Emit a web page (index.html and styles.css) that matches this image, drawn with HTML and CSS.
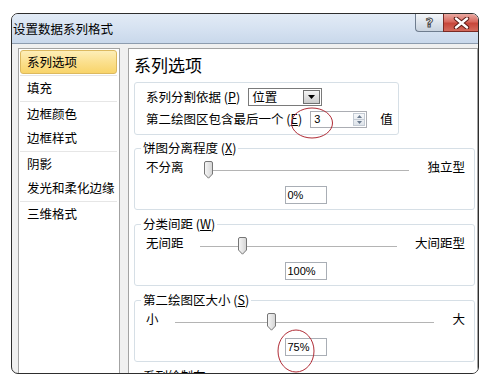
FILE: index.html
```html
<!DOCTYPE html>
<html lang="zh-CN">
<head>
    <meta charset="UTF-8">
    <title>设置数据系列格式</title>
    <link rel="stylesheet" href="styles.css">
</head>
<body>
    <div class="window">
        <div class="titlebar">
            <span class="title">设置数据系列格式</span>
            <div class="caption-buttons">
                <span class="btn-help">?</span>
                <span class="btn-close">
                    <svg width="17" height="12" viewBox="0 0 17 12">
                        <path d="M3 1.5 L14 10.5 M14 1.5 L3 10.5" stroke="#5a1a14" stroke-width="4.4" stroke-linecap="round"/>
                        <path d="M3 1.5 L14 10.5 M14 1.5 L3 10.5" stroke="#fff" stroke-width="2.4" stroke-linecap="round"/>
                    </svg>
                </span>
            </div>
        </div>
        <div class="client">
            <ul class="nav">
                <li class="nav-item active">系列选项</li>
                <li class="nav-sep"></li>
                <li class="nav-item">填充</li>
                <li class="nav-sep"></li>
                <li class="nav-item">边框颜色</li>
                <li class="nav-item">边框样式</li>
                <li class="nav-sep"></li>
                <li class="nav-item">阴影</li>
                <li class="nav-item">发光和柔化边缘</li>
                <li class="nav-sep"></li>
                <li class="nav-item">三维格式</li>
            </ul>
            <div class="panel">
                <h2 class="panel-title">系列选项</h2>

                <div class="group-plain">
                    <div class="row">
                        <span class="label">系列分割依据 (<u>P</u>)</span>
                        <div class="select">
                            <span>位置</span>
                            <span class="select-btn">
                                <svg width="7" height="4" viewBox="0 0 7 4"><path d="M0 0 H7 L3.5 4 Z" fill="#000"/></svg>
                            </span>
                        </div>
                    </div>
                    <div class="row">
                        <span class="label">第二绘图区包含最后一个 (<u>E</u>)</span>
                        <div class="spin">
                            <span class="spin-value">3</span>
                            <span class="spin-btns">
                                <span class="spin-up"><svg width="5" height="3" viewBox="0 0 5 3"><path d="M0 3 L2.5 0 L5 3 Z" fill="#6b7b8f"/></svg></span>
                                <span class="spin-down"><svg width="5" height="3" viewBox="0 0 5 3"><path d="M0 0 H5 L2.5 3 Z" fill="#6b7b8f"/></svg></span>
                            </span>
                        </div>
                        <span class="unit">值</span>
                    </div>
                </div>

                <fieldset class="group">
                    <legend>饼图分离程度 (<u>X</u>)</legend>
                    <div class="slider-row">
                        <span>不分离</span>
                        <div class="track track-wide"><span class="thumb" style="left: 0%"></span></div>
                        <span>独立型</span>
                    </div>
                    <div class="value">0%</div>
                </fieldset>

                <fieldset class="group">
                    <legend>分类间距 (<u>W</u>)</legend>
                    <div class="slider-row">
                        <span>无间距</span>
                        <div class="track"><span class="thumb" style="left: 20%"></span></div>
                        <span>大间距型</span>
                    </div>
                    <div class="value">100%</div>
                </fieldset>

                <fieldset class="group">
                    <legend>第二绘图区大小 (<u>S</u>)</legend>
                    <div class="slider-row">
                        <span>小</span>
                        <div class="track"><span class="thumb" style="left: 35.9%"></span></div>
                        <span>大</span>
                    </div>
                    <div class="value">75%</div>
                </fieldset>

                <fieldset class="group">
                    <legend>系列绘制在</legend>
                </fieldset>
            </div>
        </div>
    </div>

    <!-- red marks drawn over the screenshot -->
    <svg class="marks" width="489" height="387">
        <ellipse cx="312" cy="123" rx="20.5" ry="15" />
        <ellipse cx="296" cy="351" rx="18" ry="21" />
    </svg>
</body>
</html>
```

FILE: styles.css
```css
* {
    box-sizing: border-box;
}

body {
    margin: 0;
    background: #fff;
    font-family: "Noto Sans CJK SC", "Noto Sans", sans-serif;
    font-size: 12.5px;
    color: #000;
    position: relative;
    width: 489px;
    height: 387px;
    overflow: hidden;
}

.window {
    margin: 13px 0 0 11px;
    width: 468px;
    height: 361px;
    border: 1px solid #2e2e2e;
    border-radius: 7px;
    overflow: hidden;
    background: #f0f0f0;
    display: flex;
    flex-direction: column;
}

/* title bar */
.titlebar {
    height: 30px;
    flex: none;
    display: flex;
    justify-content: space-between;
    align-items: flex-start;
    border-bottom: 1px solid #8d9cae;
    background: linear-gradient(180deg, #e2ebf6 0%, #d6e2f1 50%, #c9d8eb 100%);
}

.title {
    line-height: 29px;
    padding-left: 1px;
    font-size: 12.5px;
}

.caption-buttons {
    display: flex;
    height: 18px;
}

.btn-help {
    width: 28px;
    height: 18px;
    border-left: 1px solid #6e7c8e;
    border-bottom: 1px solid #6e7c8e;
    border-bottom-left-radius: 4px;
    background: linear-gradient(180deg, #f3f6f9 0%, #dde4ec 50%, #c9d3df 100%);
    color: #fff;
    -webkit-text-stroke: 1px #4a4a4a;
    font-family: "DejaVu Sans", sans-serif;
    font-weight: bold;
    font-size: 13px;
    line-height: 17px;
    text-align: center;
}

.btn-close {
    width: 35px;
    height: 18px;
    border-left: 1px solid #7a2a24;
    border-bottom: 1px solid #7a2a24;
    background: linear-gradient(180deg, #e9aaa2 0%, #d8695e 45%, #c7463a 55%, #d36a5c 100%);
    display: flex;
    align-items: center;
    justify-content: center;
}

/* client area */
.client {
    flex: 1;
    display: flex;
    gap: 8px;
    padding: 4px 0 0 6px;
    min-height: 0;
}

.nav {
    list-style: none;
    margin: 0;
    padding: 1px 1px;
    width: 102px;
    flex: none;
    background: #fff;
    border: 1px solid #a3a3a3;
    border-bottom: none;
}

.nav-item {
    height: 24px;
    line-height: 23px;
    padding-left: 7px;
    margin-right: 1px;
    white-space: nowrap;
}

.nav-item.active {
    border: 1px solid #dcb95f;
    border-radius: 3px;
    padding-left: 6px;
    line-height: 21px;
    background: linear-gradient(180deg, #fdeeb8 0%, #fbe08e 50%, #f8d46a 100%);
}

.nav-sep {
    height: 1px;
    margin: 1px 1px 0 0;
    background: #e6e6e6;
}

.panel {
    flex: 1;
    background: #fff;
    border: 1px solid #a3a3a3;
    border-bottom: none;
    padding: 6px 2px 0 5px;
    overflow: hidden;
}

.panel-title {
    margin: 0 0 7px;
    font-size: 17px;
    font-weight: normal;
    line-height: 20px;
}

/* first group without title */
.group-plain {
    width: 265px;
    border: 1px solid #d6dfe6;
    border-radius: 3px;
    padding: 5px 4px 6px 11px;
    display: flex;
    flex-direction: column;
    gap: 4px;
}

.row {
    display: flex;
    align-items: center;
    height: 18px;
    line-height: 18px;
    white-space: nowrap;
}

.label {
    flex: none;
    margin-right: 8px;
}

.select {
    width: 74px;
    height: 18px;
    border: 1px solid #7a7a7a;
    display: flex;
    align-items: center;
    justify-content: space-between;
    padding: 0 1px 0 3px;
}

.select-btn {
    width: 17px;
    height: 14px;
    border: 1px solid #6f6f6f;
    background: linear-gradient(180deg, #f5f5f5 0%, #dedede 55%, #cbcbcb 100%);
    display: flex;
    align-items: center;
    justify-content: center;
}

.spin {
    flex: none;
    width: 57px;
    height: 17px;
    border: 1px solid #abadb3;
    display: flex;
    align-items: center;
    justify-content: space-between;
    padding: 0 1px 0 3px;
}

.spin-value,
.value {
    font-family: "Liberation Sans", sans-serif;
    font-size: 11px;
}

.spin-btns {
    width: 12px;
    height: 13px;
    display: flex;
    flex-direction: column;
    border: 1px solid #c4cbd4;
    background: linear-gradient(180deg, #f6f8fa, #dfe4ea);
}

.spin-up,
.spin-down {
    flex: 1;
    display: flex;
    align-items: center;
    justify-content: center;
}

.spin-up {
    border-bottom: 1px solid #c4cbd4;
}

.unit {
    flex: none;
    margin-left: 13px;
}

/* titled groups */
.group {
    margin: 5px 0 0;
    border: 1px solid #d6dfe6;
    border-radius: 3px;
    padding: 0 9px 5px 11px;
    min-width: 0;
}

.group + .group {
    margin-top: 6px;
}

.group legend {
    padding: 0 2px;
    margin-left: -5px;
    line-height: 16px;
}

.slider-row {
    display: flex;
    align-items: flex-start;
    line-height: 18px;
    margin-top: 2px;
}

.track {
    flex: 1;
    height: 18px;
    margin: 3px 18px 0 16px;
    position: relative;
}

.track-wide {
    margin-left: 21px;
}

.track::before {
    content: "";
    position: absolute;
    left: 0;
    right: 0;
    top: 9px;
    height: 1px;
    background: #b4b4b4;
}

.thumb {
    position: absolute;
    top: 0;
    margin-left: -1px;
    width: 9px;
    height: 18px;
    background: no-repeat url("data:image/svg+xml;utf8,<svg xmlns='http://www.w3.org/2000/svg' width='9' height='18'><defs><linearGradient id='g' x1='0' x2='1'><stop offset='0' stop-color='%23f7f7f7'/><stop offset='1' stop-color='%23d4d4d4'/></linearGradient></defs><path d='M2 0.5 H7 A1.5 1.5 0 0 1 8.5 2 V13 L4.5 17.2 L0.5 13 V2 A1.5 1.5 0 0 1 2 0.5 Z' fill='url(%23g)' stroke='%23767676'/></svg>");
}

.value {
    width: 42px;
    height: 18px;
    margin: 7px auto 0;
    border: 1px solid #a9aeb5;
    padding-left: 2px;
    line-height: 16px;
}

.marks {
    position: absolute;
    left: 0;
    top: 0;
    pointer-events: none;
}

.marks ellipse {
    fill: none;
    stroke: #b02c36;
    stroke-width: 1;
}
```
